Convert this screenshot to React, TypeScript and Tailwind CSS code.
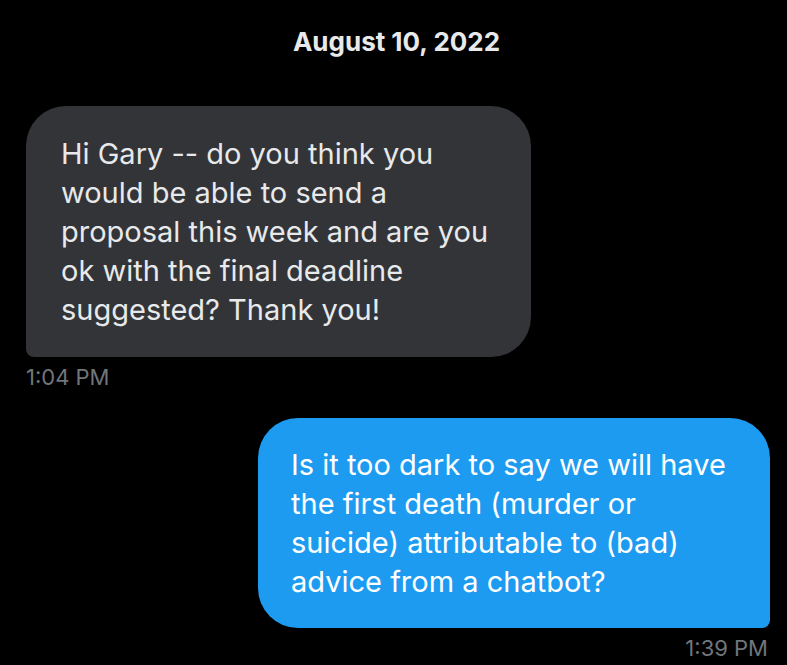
export default function App() {
  return (
    <div className="w-[787px] h-[665px] bg-black overflow-hidden font-['Inter','Liberation_Sans',sans-serif]">
      {/* Date header */}
      <div className="pt-[27px] pl-[6px] h-[57px] text-center text-[26px] leading-[30px] font-bold text-[#e7e9ea]">
        August 10, 2022
      </div>

      {/* Incoming */}
      <div className="mt-[49px] pl-[26px]">
        <div className="w-[505px] h-[251px] bg-[#333438] rounded-[40px] rounded-bl-[8px] pl-[35px] pt-[28px] text-[29px] leading-[39px] text-[#e7e9ea]">
          Hi Gary -- do you think you
          <br />
          would be able to send a
          <br />
          proposal this week and are you
          <br />
          ok with the final deadline
          <br />
          suggested? Thank you!
        </div>
        <div className="mt-[8px] h-[24px] text-[22px] leading-[24px] text-[#71767b]">1:04 PM</div>
      </div>

      {/* Outgoing */}
      <div className="mt-[29px] pr-[17px] flex flex-col items-end">
        <div className="w-[512px] h-[210px] bg-[#1d9bf0] rounded-[40px] rounded-br-[8px] pl-[33px] pt-[27px] text-[29px] leading-[39px] text-white">
          Is it too dark to say we will have
          <br />
          the first death (murder or
          <br />
          suicide) attributable to (bad)
          <br />
          advice from a chatbot?
        </div>
        <div className="mt-[8px] mr-[2px] h-[24px] text-[22px] leading-[24px] text-[#71767b]">1:39 PM</div>
      </div>
    </div>
  );
}
